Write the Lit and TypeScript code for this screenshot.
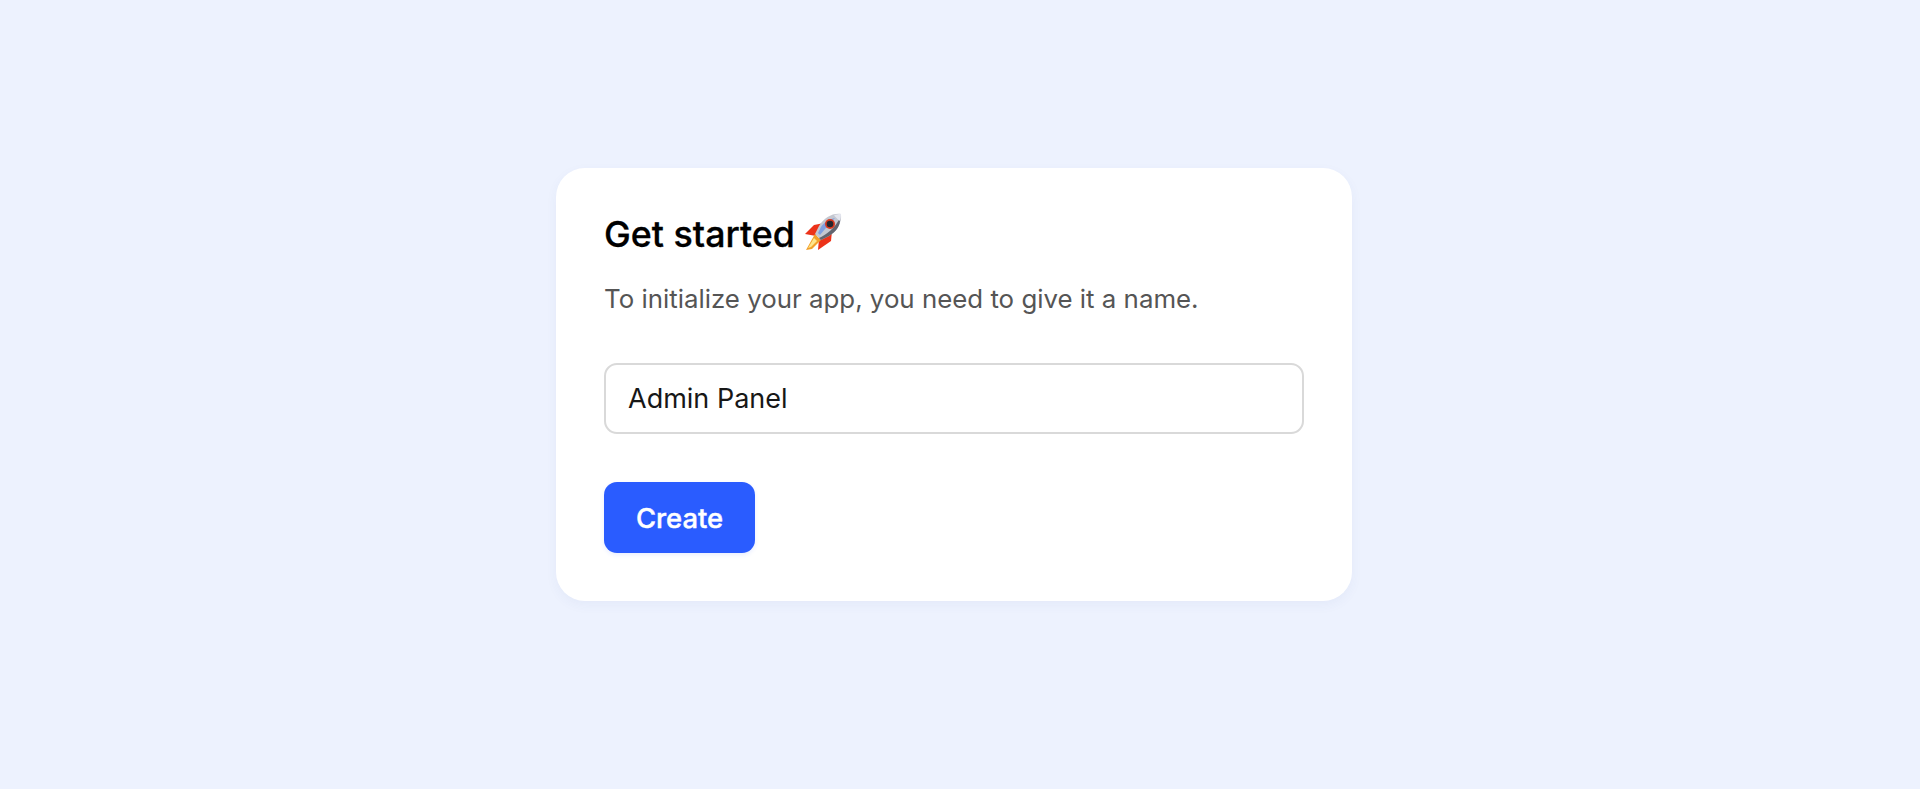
import { LitElement, html, css } from "lit";
import { customElement } from "lit/decorators.js";

@customElement("app-root")
export class AppRoot extends LitElement {
  static styles = css`
    :host {
      display: block;
      box-sizing: border-box;
      height: 789px;
      padding: 168px 0 0 556px;
      background: #edf2fe;
      font-family: Inter, "Liberation Sans", sans-serif;
    }
    .card {
      box-sizing: border-box;
      width: 796px;
      height: 433px;
      padding: 48px;
      background: #ffffff;
      border-radius: 29px;
      box-shadow: 0 4px 12px rgba(60, 80, 160, 0.05);
      display: flex;
      flex-direction: column;
    }
    .card > * {
      flex: none;
    }
    h1 {
      margin: 0;
      height: 36px;
      font-size: 35.8px;
      line-height: 36px;
      font-weight: 500;
      -webkit-text-stroke: 0.3px #000;
      color: #000;
      display: flex;
      align-items: center;
      gap: 9px;
    }
    .rocket {
      width: 38px;
      height: 38px;
      flex: none;
      margin-bottom: 4px;
    }
    p {
      margin: 31px 0 0;
      font-size: 25.85px;
      line-height: 32px;
      color: #555;
    }
    .input {
      box-sizing: border-box;
      margin-top: 48px;
      width: 700px;
      height: 71px;
      border: 2px solid #d9d9d9;
      border-radius: 13px;
      padding: 0 22px;
      font-family: inherit;
      font-size: 27px;
      color: #171717;
      background: #fff;
      outline: none;
    }
    button {
      box-sizing: border-box;
      margin-top: 48px;
      align-self: flex-start;
      width: 151px;
      height: 71px;
      border: none;
      border-radius: 13px;
      background: #2a5cff;
      color: #fff;
      font-family: inherit;
      font-size: 27.4px;
      font-weight: 500;
      -webkit-text-stroke: 0.4px #fff;
      box-shadow: 0 2px 4px rgba(42, 92, 255, 0.1);
    }
  `;

  render() {
    return html`
      <div class="card">
        <h1>
          Get started
          <svg class="rocket" viewBox="0 0 38 38" aria-label="rocket">
            <path d="M10 12 L20 10 L12 23 L1 21 Z" fill="#ec3219" />
            <path d="M27 28 L28 18 L15 26 L14 37 Z" fill="#ec3219" />
            <path d="M11 21 L17 27 L8 36 L2 37 Z" fill="#f2a02a" />
            <path d="M10 25 L13 28 L7 34 L4 35 Z" fill="#fde58a" />
            <path d="M37 1 C28 0 20 5 15 13 L11 21 L17 27 L25 23 C33 18 38 10 37 1 Z" fill="#c4c7d0" />
            <path d="M31 5 C26 6 20 9 17 14 L14 20 L16 22 C22 15 26 10 31 5 Z" fill="#7f9fe0" />
            <path d="M15 25 C22 22 31 15 36 5 C37 12 32 19 25 23 L17 27 Z" fill="#62656f" />
            <path d="M37 1 C34 1 32 1.500 30 2.500 L35.500 8 C36.500 6 37 4 37 1 Z" fill="#e4e6ee" />
            <circle cx="26" cy="11" r="5" fill="#d9391f" />
            <circle cx="26" cy="11" r="3.300" fill="#26262e" />
          </svg>
        </h1>
        <p>To initialize your app, you need to give it a name.</p>
        <input class="input" .value=${"Admin Panel"} />
        <button>Create</button>
      </div>
    `;
  }
}
